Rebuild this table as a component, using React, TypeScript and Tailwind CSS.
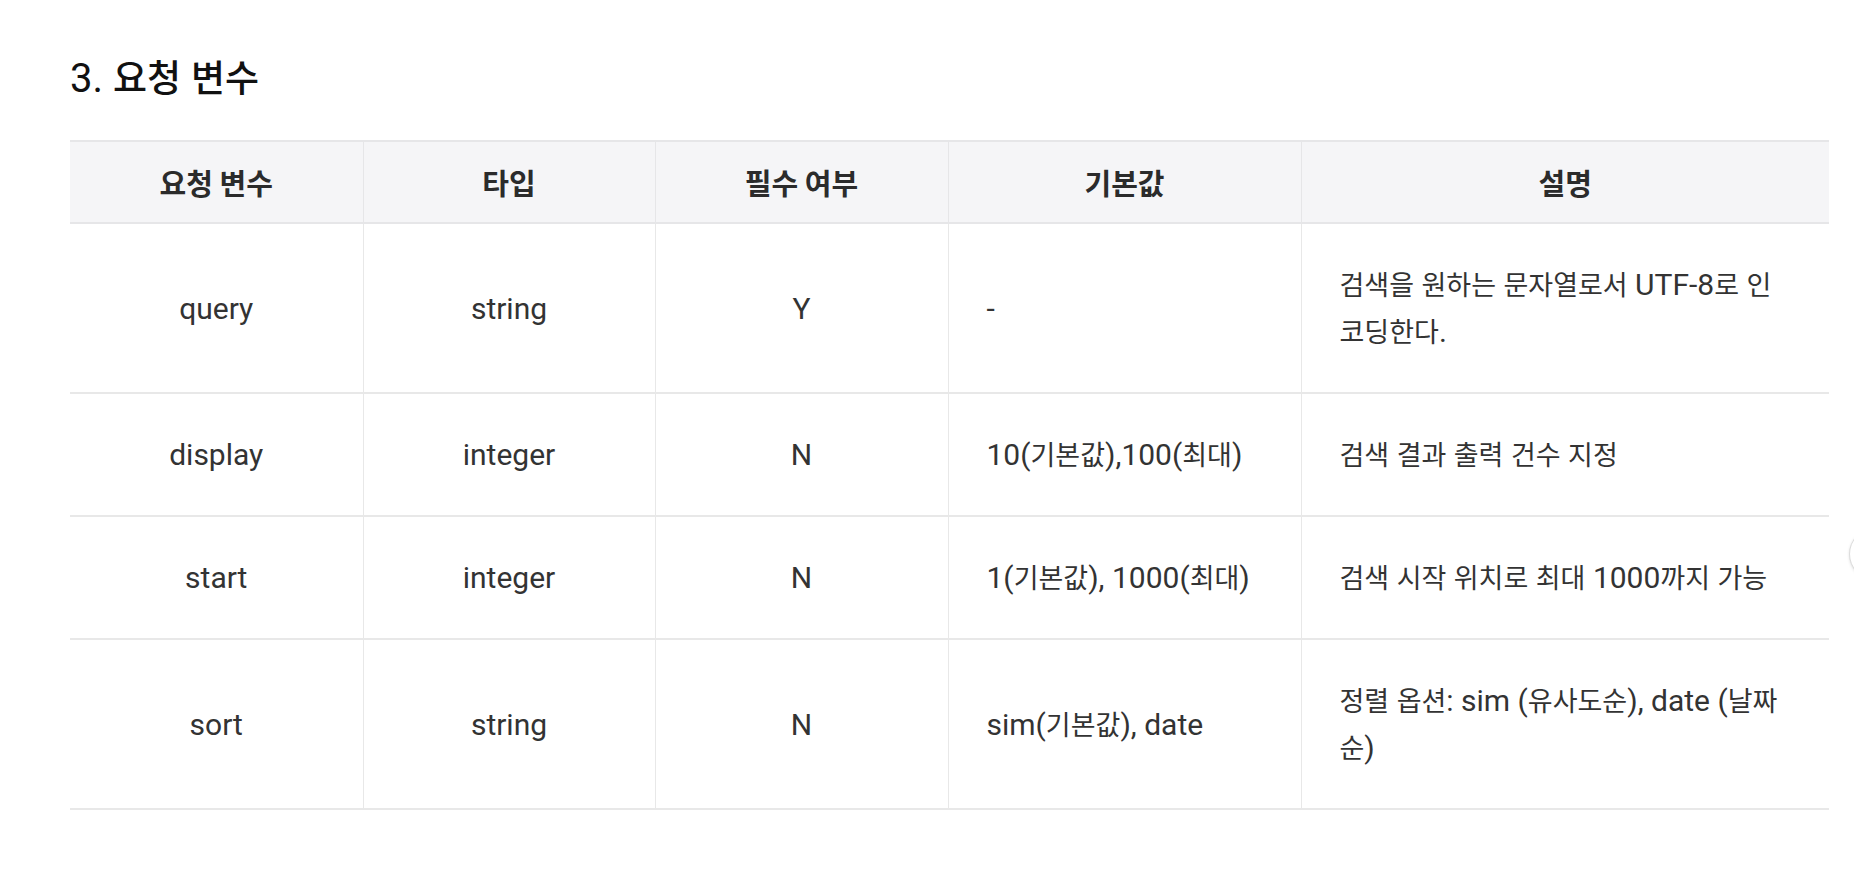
import React from "react";

const HANGUL_SPLIT = /([\u1100-\u11FF\u3130-\u318F\uAC00-\uD7AF]+)/;
const HANGUL_TEST = /[\u1100-\u11FF\u3130-\u318F\uAC00-\uD7AF]/;

function Mixed({ text, ko, en }: { text: string; ko: string; en: string }) {
  const parts = text.split(HANGUL_SPLIT);
  return (
    <>
      {parts.map((p, i) =>
        p === "" ? null : HANGUL_TEST.test(p) ? (
          <span key={i} className={ko}>
            {p}
          </span>
        ) : (
          <span key={i} className={en}>
            {p}
          </span>
        )
      )}
    </>
  );
}

const BODY_KO = "font-['Noto_Sans_CJK_KR',sans-serif] text-[27px]";
const BODY_EN = "font-['Roboto',sans-serif] text-[30px]";

type Row = {
  name: string;
  type: string;
  req: string;
  def: string;
  desc: string[];
};

const rows: Row[] = [
  {
    name: "query",
    type: "string",
    req: "Y",
    def: "-",
    desc: ["검색을 원하는 문자열로서 UTF-8로 인", "코딩한다."],
  },
  {
    name: "display",
    type: "integer",
    req: "N",
    def: "10(기본값),100(최대)",
    desc: ["검색 결과 출력 건수 지정"],
  },
  {
    name: "start",
    type: "integer",
    req: "N",
    def: "1(기본값), 1000(최대)",
    desc: ["검색 시작 위치로 최대 1000까지 가능"],
  },
  {
    name: "sort",
    type: "string",
    req: "N",
    def: "sim(기본값), date",
    desc: ["정렬 옵션: sim (유사도순), date (날짜", "순)"],
  },
];

const headers = ["요청 변수", "타입", "필수 여부", "기본값", "설명"];

export default function App() {
  return (
    <div className="relative min-h-screen w-full overflow-hidden bg-white pl-[70px] pt-[54px]">
      <h2 className="leading-[44px] text-[#111] font-['Noto_Sans_CJK_KR',sans-serif] text-[37px] font-medium whitespace-nowrap">
        <Mixed
          text="3. 요청 변수"
          ko="font-['Noto_Sans_CJK_KR',sans-serif] text-[37px] font-medium"
          en="font-['Roboto',sans-serif] text-[40px] font-normal"
        />
      </h2>

      <table className="mt-[39px] w-[1759px] table-fixed border-collapse">
        <colgroup>
          <col className="w-[293px]" />
          <col className="w-[292px]" />
          <col className="w-[293px]" />
          <col className="w-[353px]" />
          <col className="w-[528px]" />
        </colgroup>
        <thead>
          <tr className="bg-[#f5f5f7]">
            {headers.map((h, i) => (
              <th
                key={h}
                className={
                  i < headers.length - 1
                    ? "border-t-2 border-b-2 border-r border-[#e6e6e8] py-[21px] text-center font-['Noto_Sans_CJK_KR',sans-serif] text-[29px] font-bold leading-[38px] text-[#2b2b2b]"
                    : "border-t-2 border-b-2 border-[#e6e6e8] py-[21px] text-center font-['Noto_Sans_CJK_KR',sans-serif] text-[29px] font-bold leading-[38px] text-[#2b2b2b]"
                }
              >
                {h}
              </th>
            ))}
          </tr>
        </thead>
        <tbody>
          {rows.map((r) => (
            <tr key={r.name}>
              <td className="border-b-2 border-r border-[#e8e8e8] px-[38px] py-[37px] text-center align-middle font-['Noto_Sans_CJK_KR',sans-serif] text-[27px] leading-[46px] text-[#333]">
                <span className={BODY_EN}>{r.name}</span>
              </td>
              <td className="border-b-2 border-r border-[#e8e8e8] px-[38px] py-[37px] text-center align-middle font-['Noto_Sans_CJK_KR',sans-serif] text-[27px] leading-[46px] text-[#333]">
                <span className={BODY_EN}>{r.type}</span>
              </td>
              <td className="border-b-2 border-r border-[#e8e8e8] px-[38px] py-[37px] text-center align-middle font-['Noto_Sans_CJK_KR',sans-serif] text-[27px] leading-[46px] text-[#333]">
                <span className={BODY_EN}>{r.req}</span>
              </td>
              <td className="border-b-2 border-r border-[#e8e8e8] px-[38px] py-[37px] text-left align-middle font-['Noto_Sans_CJK_KR',sans-serif] text-[27px] leading-[46px] whitespace-nowrap text-[#333]">
                <Mixed text={r.def} ko={BODY_KO} en={BODY_EN} />
              </td>
              <td className="border-b-2 border-[#e8e8e8] px-[38px] py-[37px] text-left align-middle font-['Noto_Sans_CJK_KR',sans-serif] text-[27px] leading-[46px] whitespace-nowrap text-[#333]">
                {r.desc.map((line, i) => (
                  <React.Fragment key={i}>
                    {i > 0 && <br />}
                    <Mixed text={line} ko={BODY_KO} en={BODY_EN} />
                  </React.Fragment>
                ))}
              </td>
            </tr>
          ))}
        </tbody>
      </table>

      <div className="absolute left-[1849px] top-[528px] h-[52px] w-[52px] rounded-full border border-[#dcdcdc] bg-white shadow-sm" />
    </div>
  );
}
